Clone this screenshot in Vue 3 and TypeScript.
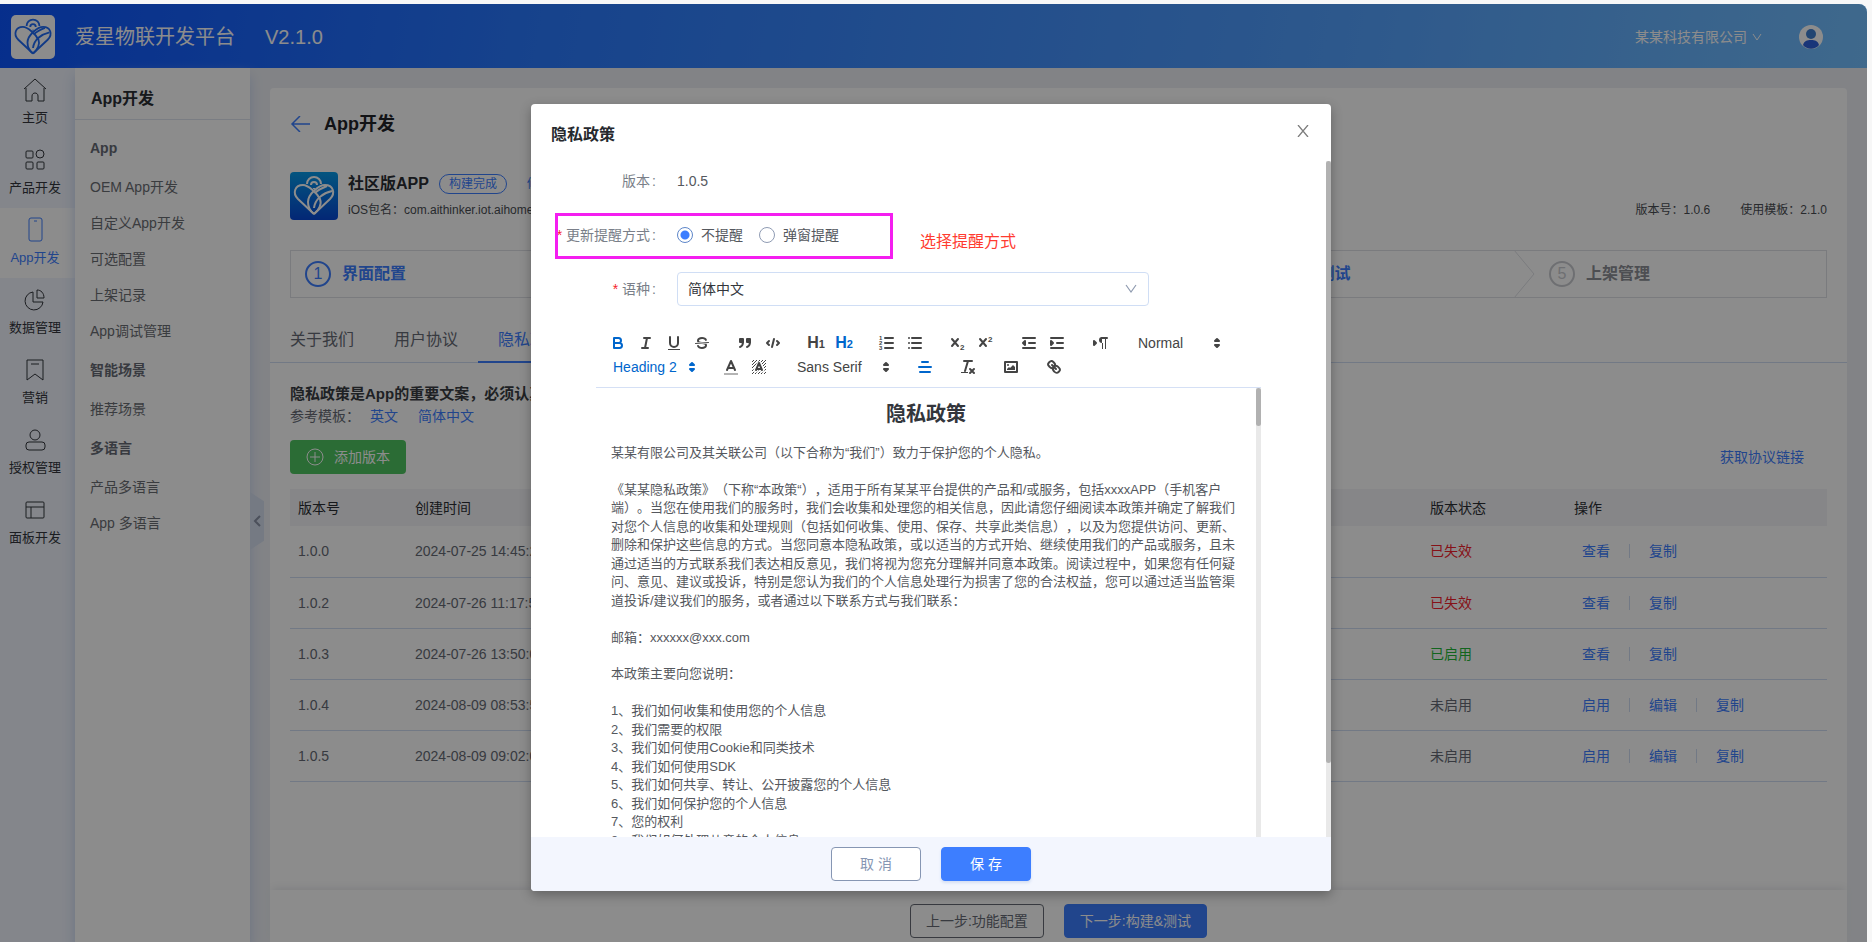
<script setup lang="ts">
import { ref } from 'vue'

interface MenuEntry { text: string; heading?: boolean }
interface VersionRow { version: string; time: string; status: string; tone: string; actions: string[] }

const railItems = [
  { key: 'home', text: '主页' },
  { key: 'product', text: '产品开发' },
  { key: 'app', text: 'App开发' },
  { key: 'data', text: '数据管理' },
  { key: 'market', text: '营销' },
  { key: 'auth', text: '授权管理' },
  { key: 'panel', text: '面板开发' },
]
const activeRail = ref('app')

const menu: MenuEntry[] = [
  { text: 'App', heading: true },
  { text: 'OEM App开发' },
  { text: '自定义App开发' },
  { text: '可选配置' },
  { text: '上架记录' },
  { text: 'App调试管理' },
  { text: '智能场景', heading: true },
  { text: '推荐场景' },
  { text: '多语言', heading: true },
  { text: '产品多语言' },
  { text: 'App 多语言' },
]

const steps = ['界面配置', '功能配置', '证书配置', '构建&测试', '上架管理']
const tabs = ['关于我们', '用户协议', '隐私政策']
const activeTab = ref('隐私政策')

const rows: VersionRow[] = [
  { version: '1.0.0', time: '2024-07-25 14:45:22', status: '已失效', tone: 'bad', actions: ['查看', '复制'] },
  { version: '1.0.2', time: '2024-07-26 11:17:50', status: '已失效', tone: 'bad', actions: ['查看', '复制'] },
  { version: '1.0.3', time: '2024-07-26 13:50:01', status: '已启用', tone: 'good', actions: ['查看', '复制'] },
  { version: '1.0.4', time: '2024-08-09 08:53:51', status: '未启用', tone: 'idle', actions: ['启用', '编辑', '复制'] },
  { version: '1.0.5', time: '2024-08-09 09:02:01', status: '未启用', tone: 'idle', actions: ['启用', '编辑', '复制'] },
]

const remind = ref('none')
const language = ref('zh')

const paragraphs = [
  '某某有限公司及其关联公司（以下合称为“我们”）致力于保护您的个人隐私。',
  '',
  '《某某隐私政策》（下称“本政策“），适用于所有某某平台提供的产品和/或服务，包括xxxxAPP（手机客户端）。当您在使用我们的服务时，我们会收集和处理您的相关信息，因此请您仔细阅读本政策并确定了解我们对您个人信息的收集和处理规则（包括如何收集、使用、保存、共享此类信息），以及为您提供访问、更新、删除和保护这些信息的方式。当您同意本隐私政策，或以适当的方式开始、继续使用我们的产品或服务，且未通过适当的方式联系我们表达相反意见，我们将视为您充分理解并同意本政策。阅读过程中，如果您有任何疑问、意见、建议或投诉，特别是您认为我们的个人信息处理行为损害了您的合法权益，您可以通过适当监管渠道投诉/建议我们的服务，或者通过以下联系方式与我们联系：',
  '',
  '邮箱：xxxxxx@xxx.com',
  '',
  '本政策主要向您说明：',
  '',
  '1、我们如何收集和使用您的个人信息',
  '2、我们需要的权限',
  '3、我们如何使用Cookie和同类技术',
  '4、我们如何使用SDK',
  '5、我们如何共享、转让、公开披露您的个人信息',
  '6、我们如何保护您的个人信息',
  '7、您的权利',
  '8、我们如何处理儿童的个人信息',
]
</script>

<template>
  <div class="window">
    <div class="frame">
      <header class="topbar">
        <span class="logo">
          <svg viewBox="0 0 48 48" class="emblem">
            <path d="M24 42 8 27C2 21 5 13 13 13c5 0 14 8 17 14 2 5-1 11-6 15" />
            <path d="M24 42 40 27c6-6 3-14-5-14-6 0-17 9-17 17 0 5 2 9 6 12" />
            <path d="M42 19c-9 2-17 8-18 17M37 14c-5 2-9 4-12 7" />
            <path d="M17 12a7 7 0 0 1 14 0M21 13a3 3 0 0 1 6 0M24 16v1" />
          </svg>
        </span>
        <span class="brand">爱星物联开发平台</span>
        <span class="release">V2.1.0</span>
        <button class="company" type="button">
          某某科技有限公司
          <svg viewBox="0 0 10 10" width="10" height="10"><path d="M1 2l4 6 4-6" fill="none" stroke="currentColor" /></svg>
        </button>
        <svg class="avatar" viewBox="0 0 24 24">
          <circle cx="12" cy="12" r="12" fill="#fff" />
          <circle cx="12" cy="9" r="5" fill="#3d7fd0" />
          <path d="M4 20c1-4 4-5 8-5s7 1 8 5c-4 5-12 5-16 0z" fill="#2f62dc" />
        </svg>
      </header>

      <div class="body">
        <nav class="rail">
          <a v-for="item in railItems" :key="item.key" href="#" :class="{ on: item.key === activeRail }" @click.prevent="activeRail = item.key">
            <svg viewBox="0 0 24 24">
              <template v-if="item.key === 'home'"><path d="M1 11 12 1l11 10M3 10v13h6v-5c0-4 6-4 6 0v5h6V10" /></template>
              <template v-else-if="item.key === 'product'"><rect x="3" y="3" width="7" height="7" rx="1" /><circle cx="17" cy="6" r="4" /><rect x="3" y="14" width="7" height="7" rx="1" /><rect x="14" y="14" width="7" height="7" rx="1" /></template>
              <template v-else-if="item.key === 'app'"><rect x="6" y="0" width="13" height="23" rx="2" /><path d="M11 3h3" /></template>
              <template v-else-if="item.key === 'data'"><path d="M10 4a9 9 0 1 0 10 10H10z" /><path d="M14 2v8h7c0-5-3-8-7-8z" /></template>
              <template v-else-if="item.key === 'market'"><path d="M4 2h16v20l-8-6-8 6z" /><path d="M8 6h8" /></template>
              <template v-else-if="item.key === 'auth'"><circle cx="12" cy="7" r="5" /><rect x="3" y="14" width="19" height="8" rx="3" /></template>
              <template v-else><rect x="3" y="4" width="18" height="16" rx="1" /><path d="M3 9h18M8 9v11" /></template>
            </svg>
            <span>{{ item.text }}</span>
          </a>
        </nav>

        <aside class="side">
          <h2>App开发</h2>
          <ul>
            <li v-for="entry in menu" :key="entry.text" :class="{ heading: entry.heading }">
              <strong v-if="entry.heading">{{ entry.text }}</strong>
              <a v-else href="#" @click.prevent>{{ entry.text }}</a>
            </li>
          </ul>
          <button class="collapse" type="button" aria-label="收起菜单">
            <svg viewBox="0 0 8 12" width="8" height="12"><path d="M7 1 2 6l5 5" fill="none" stroke="#8a93a6" stroke-width="2" /></svg>
          </button>
        </aside>

        <main class="main">
          <section class="card">
            <div class="title">
              <button type="button" aria-label="返回">
                <svg viewBox="0 0 20 16" width="20" height="16"><path d="M10 0 2 8l8 8M2 8h18" fill="none" stroke="#3d7eff" stroke-width="1.5" /></svg>
              </button>
              <h1>App开发</h1>
            </div>

            <div class="app">
              <span class="appicon">
                <svg viewBox="0 0 48 48" class="emblem">
                  <path d="M24 42 8 27C2 21 5 13 13 13c5 0 14 8 17 14 2 5-1 11-6 15" />
                  <path d="M24 42 40 27c6-6 3-14-5-14-6 0-17 9-17 17 0 5 2 9 6 12" />
                  <path d="M42 19c-9 2-17 8-18 17M37 14c-5 2-9 4-12 7" />
                  <path d="M17 12a7 7 0 0 1 14 0M21 13a3 3 0 0 1 6 0M24 16v1" />
                </svg>
              </span>
              <div class="appinfo">
                <div class="appname"><strong>社区版APP</strong><span class="tag">构建完成</span><a href="#" @click.prevent>修改</a></div>
                <div class="pkg">iOS包名：com.aithinker.iot.aihome</div>
              </div>
              <div class="appmeta"><span>版本号：1.0.6</span><span>使用模板：2.1.0</span></div>
            </div>

            <ol class="steps">
              <li v-for="(step, i) in steps" :key="step" :class="{ todo: i === 4 }">
                <span class="num">{{ i + 1 }}</span>
                <strong>{{ step }}</strong>
                <svg v-if="i < 4" viewBox="0 0 22 48" width="22" height="48"><path d="M1 0l20 24L1 48" fill="none" stroke="#dfe1e6" /></svg>
              </li>
            </ol>

            <div class="tabs">
              <button v-for="tab in tabs" :key="tab" type="button" :class="{ on: tab === activeTab }" @click="activeTab = tab">{{ tab }}</button>
            </div>

            <p class="notice">隐私政策是App的重要文案，必须认真填写</p>
            <p class="refs">参考模板：<a href="#" @click.prevent>英文</a><a href="#" @click.prevent>简体中文</a></p>

            <div class="actions">
              <button class="add" type="button">
                <svg viewBox="0 0 18 18" width="18" height="18"><circle cx="9" cy="9" r="8" /><path d="M9 4v10M4 9h10" /></svg>
                添加版本
              </button>
              <a href="#" @click.prevent>获取协议链接</a>
            </div>

            <table>
              <thead>
                <tr><th class="c1">版本号</th><th>创建时间</th><th class="c3">版本状态</th><th class="c4">操作</th></tr>
              </thead>
              <tbody>
                <tr v-for="row in rows" :key="row.version">
                  <td>{{ row.version }}</td>
                  <td>{{ row.time }}</td>
                  <td :class="row.tone">{{ row.status }}</td>
                  <td><div class="ops"><a v-for="action in row.actions" :key="action" href="#" @click.prevent>{{ action }}</a></div></td>
                </tr>
              </tbody>
            </table>
          </section>
          <footer class="bottom">
            <button class="ghost" type="button">上一步:功能配置</button>
            <button class="solid" type="button">下一步:构建&amp;测试</button>
          </footer>
        </main>
      </div>

      <div class="mask">
        <div class="modal" role="dialog" aria-labelledby="dialog-title">
          <div class="modal-head">
            <h2 id="dialog-title">隐私政策</h2>
            <button type="button" aria-label="关闭">
              <svg viewBox="0 0 12 12" width="12" height="12"><path d="M1 0l10 12M11 0 1 12" fill="none" stroke="#7d7d7d" stroke-width="1.3" /></svg>
            </button>
          </div>

          <div class="modal-body">
            <div class="row">
              <span class="label">版本<i>:</i></span>
              <span class="value">1.0.5</span>
            </div>
            <div class="row" role="radiogroup" aria-labelledby="remind-label">
              <span id="remind-label" class="label"><b>*</b>更新提醒方式<i>:</i></span>
              <label class="radio"><input v-model="remind" type="radio" name="remind" value="none" />不提醒</label>
              <label class="radio"><input v-model="remind" type="radio" name="remind" value="popup" />弹窗提醒</label>
              <span class="frame-mark"></span>
              <span class="hint">选择提醒方式</span>
            </div>
            <div class="row">
              <label class="label" for="language"><b>*</b>语种<i>:</i></label>
              <span class="select">
                <select id="language" v-model="language"><option value="zh">简体中文</option><option value="en">英文</option></select>
                <svg viewBox="0 0 12 10" width="12" height="10"><path d="M1 1l5 7 5-7" fill="none" stroke="#8f9bb0" stroke-width="1.2" /></svg>
              </span>
            </div>

            <div class="editor">
              <div class="toolbar">
                <div class="line">
                  <div class="group">
                    <button type="button" class="on" aria-label="加粗"><svg viewBox="0 0 18 18"><path d="M5 4h4.500a2.500 2.500 0 0 1 0 5H5zM5 9h5.500a2.500 2.500 0 0 1 0 5H5z" /></svg></button>
                    <button type="button" aria-label="斜体"><svg viewBox="0 0 18 18"><path d="M7 4h6M5 14h6M8 14l2-10" /></svg></button>
                    <button type="button" aria-label="下划线"><svg viewBox="0 0 18 18"><path d="M5 3v6a4 4 0 0 0 8 0V3" /><rect class="fill" x="3" y="15" width="12" height="1" /></svg></button>
                    <button type="button" aria-label="删除线"><svg viewBox="0 0 18 18"><path class="thin" d="M15.500 8.500l-13 1" /><path class="fill" d="M9 8C6.500 7.800 6 7.500 6 6.500 6 5.800 7.300 5 9 5c1.600 0 2.800.7 3 1.300a1 1 0 0 0 1.900-.6C13.400 4.100 11.400 3 9 3 6.200 3 4 4.500 4 6.500a3.200 3.200 0 0 0 .5 1.800zM9 10c2.500.2 3 .5 3 1.500 0 .7-1.300 1.500-3 1.500-1.600 0-2.800-.7-3-1.300a1 1 0 1 0-1.900.6C4.600 13.900 6.600 15 9 15c2.800 0 5-1.500 5-3.500a3.200 3.200 0 0 0-.5-1.800z" /></svg></button>
                  </div>
                  <div class="group">
                    <button type="button" aria-label="引用"><svg viewBox="0 0 18 18"><rect class="both" x="4" y="5" width="3" height="3" /><rect class="both" x="11" y="5" width="3" height="3" /><path d="M7 8c0 4-3 5-3 5M14 8c0 4-3 5-3 5" /></svg></button>
                    <button type="button" aria-label="代码"><svg viewBox="0 0 18 18"><path d="M5 7 3 9l2 2M13 7l2 2-2 2M10 5 8 13" /></svg></button>
                  </div>
                  <div class="group">
                    <button type="button" class="hx">H<small>1</small></button>
                    <button type="button" class="hx on">H<small>2</small></button>
                  </div>
                  <div class="group">
                    <button type="button" aria-label="有序列表"><svg viewBox="0 0 18 18"><path d="M7 4h8M7 9h8M7 14h8" /><text x="1" y="6">1</text><text x="1" y="11">2</text><text x="1" y="16">3</text></svg></button>
                    <button type="button" aria-label="无序列表"><svg viewBox="0 0 18 18"><path d="M6 4h9M6 9h9M6 14h9M3 4v0M3 9v0M3 14v0" /></svg></button>
                  </div>
                  <div class="group">
                    <button type="button" aria-label="下标"><svg viewBox="0 0 18 18"><path d="M3 5l6 7M9 5l-6 7" /><text class="digit" x="11" y="16">2</text></svg></button>
                    <button type="button" aria-label="上标"><svg viewBox="0 0 18 18"><path d="M3 5l6 7M9 5l-6 7" /><text class="digit" x="11" y="8">2</text></svg></button>
                  </div>
                  <div class="group">
                    <button type="button" aria-label="减少缩进"><svg viewBox="0 0 18 18"><path d="M3 14h12M3 4h12M9 9h6" /><path class="both" d="M5 7v4L3 9z" /></svg></button>
                    <button type="button" aria-label="增加缩进"><svg viewBox="0 0 18 18"><path d="M3 14h12M3 4h12M9 9h6" /><path class="both" d="M3 7v4l2-2z" /></svg></button>
                  </div>
                  <div class="group">
                    <button type="button" aria-label="文字方向"><svg viewBox="0 0 18 18"><path class="both" d="M3 11l2-2-2-2z" /><path d="M16 4h-5" /><path class="fill" d="M11 3a3 3 0 0 0 0 6h1V3zM11 4h1v11h-1zM14 4h1v11h-1z" /></svg></button>
                  </div>
                  <span class="picker"><select aria-label="字号"><option>Normal</option></select><svg viewBox="0 0 18 18"><path class="both" d="M7 11l2 2 2-2zM7 7l2-2 2 2z" /></svg></span>
                </div>
                <div class="line">
                  <span class="picker on"><select aria-label="标题级别"><option>Heading 2</option></select><svg viewBox="0 0 18 18"><path class="both" d="M7 11l2 2 2-2zM7 7l2-2 2 2z" /></svg></span>
                  <div class="group">
                    <button type="button" aria-label="文字颜色"><svg viewBox="0 0 18 18"><rect class="fill pale" x="2" y="15" width="14" height="2" /><path d="M5 12l4-9 4 9M6 10h6" /></svg></button>
                    <button type="button" aria-label="背景颜色"><svg viewBox="0 0 18 18">
                      <defs><pattern id="hatch" width="3" height="3" patternUnits="userSpaceOnUse"><path class="hair" d="M0 3l3-3M-1 1l2-2M2 4l2-2" /></pattern></defs>
                      <rect class="hatched" x="2" y="2" width="14" height="14" fill="url(#hatch)" />
                      <path class="halo" d="M6 12l3-6 3 6" /><path d="M6 12l3-7 3 7M7 11h4" />
                    </svg></button>
                  </div>
                  <span class="picker wide"><select aria-label="字体"><option>Sans Serif</option></select><svg viewBox="0 0 18 18"><path class="both" d="M7 11l2 2 2-2zM7 7l2-2 2 2z" /></svg></span>
                  <div class="group">
                    <button type="button" class="on" aria-label="居中"><svg viewBox="0 0 18 18"><path d="M3 9h12M4 14h10M6 4h6" /></svg></button>
                  </div>
                  <div class="group">
                    <button type="button" aria-label="清除格式"><svg viewBox="0 0 18 18"><path d="M5 3h8M6 13 9 3M11 11l4 4M15 11l-4 4" /><rect class="fill" x="2" y="14" width="7" height="1" /></svg></button>
                  </div>
                  <div class="group">
                    <button type="button" aria-label="图片"><svg viewBox="0 0 18 18"><rect x="3" y="4" width="12" height="10" /><circle class="fill" cx="6" cy="7" r="1" /><path class="fill" d="M5 12v-1l2-2 1 1 3-3 2 2v3z" /></svg></button>
                  </div>
                  <div class="group">
                    <button type="button" aria-label="链接"><svg viewBox="0 0 18 18"><path d="M7 7l4 4M8.900 4.600a3.500 3.500 0 0 1 .4 4.700 3.500 3.500 0 0 1-4.700-.4C3.200 7.500 2 6.400 4.200 4.200s3.300-1 4.700.4zM13.400 9.100a3.500 3.500 0 0 0-4.700-.4 3.500 3.500 0 0 0 .4 4.700c1.400 1.400 2.500 2.500 4.700.4s1-3.300-.4-4.700z" /></svg></button>
                  </div>
                </div>
              </div>
              <div class="content">
                <h3>隐私政策</h3>
                <p v-for="(text, i) in paragraphs" :key="i">{{ text }}<br v-if="!text" /></p>
                <span class="track"><span class="thumb"></span></span>
              </div>
            </div>
          </div>
          <span class="body-track"><span class="body-thumb"></span></span>

          <div class="modal-foot">
            <button class="cancel" type="button">取 消</button>
            <button class="save" type="button">保 存</button>
          </div>
        </div>
      </div>
    </div>
  </div>
</template>

<style>
html, body { margin: 0; }
body { background: #f7f7f7; overflow: hidden; }
</style>

<style scoped>
* { box-sizing: border-box; }
.window {
  height: 100vh;
  padding: 4px 5px 0 0;
  font: 14px/20px "Liberation Sans", "Noto Sans CJK SC", sans-serif;
  color: #666b75;
}
.frame { position: relative; display: flex; flex-direction: column; height: 100%; border-radius: 0 8px 0 0; overflow: hidden; background: #edeff4; }
h1, h2, h3, p, ul, ol { margin: 0; padding: 0; list-style: none; }
a { color: #3d7eff; text-decoration: none; }
button, select { font: inherit; color: inherit; border: 0; background: none; padding: 0; margin: 0; }

.topbar { display: flex; align-items: center; flex: none; height: 64px; padding: 2px 44px 0 11px; color: #fff; background: linear-gradient(100deg, #0c55ff, #2a7aff 29%, #52a0ff 71%, #73bfff); }
.logo { width: 44px; height: 44px; border-radius: 5px; background: #fff; margin-right: 20px; }
.emblem { display: block; width: 100%; height: 100%; fill: none; stroke: #fff; stroke-width: 2; stroke-linejoin: round; }
.logo .emblem { stroke: #1f6bf5; }
.brand, .release { font-size: 20px; line-height: 28px; }
.release { margin-left: 30px; }
.company { display: flex; align-items: center; gap: 5px; margin-left: auto; }
.avatar { width: 24px; height: 24px; margin-left: 37px; }

.body { display: flex; flex: 1; min-height: 0; }
.rail { width: 75px; flex: none; background: #f0f4fd; }
.rail a { display: flex; flex-direction: column; align-items: center; height: 70px; padding: 10px 5px 0 0; gap: 6px; font-size: 13px; color: #33363c; }
.rail a.on { background: #fff; color: #3d7eff; }
.rail svg { width: 24px; height: 24px; fill: none; stroke: currentColor; overflow: visible; }
.side { position: relative; width: 175px; flex: none; background: #fff; box-shadow: 0 8px 12px #c3d2ee; }
.side h2 { height: 52px; padding: 21px 15px 0 16px; font-size: 16px; line-height: 20px; color: #2b2e33; border-bottom: 1px solid #dfe3ee; }
.side ul { padding-top: 7px; }
.side li { display: flex; align-items: center; height: 36px; padding-left: 15px; }
.side li.heading { height: 42px; }
.side li a { color: #6a6d73; }
.collapse { position: absolute; left: 100%; top: 424px; width: 14px; height: 58px; background: #d5deef; clip-path: polygon(0 0, 100% 16%, 100% 84%, 0 100%); display: flex; align-items: center; justify-content: center; }

.main { display: flex; flex-direction: column; flex: 1; min-width: 0; padding: 20px 20px 0; }
.card { flex: 1; background: #fff; border-radius: 4px 4px 0 0; padding: 24px 20px 0; min-height: 0; }
.title { display: flex; align-items: center; gap: 14px; height: 24px; }
.title button { display: flex; }
h1 { font-size: 18px; line-height: 24px; color: #222429; }
.app { display: flex; margin-top: 36px; color: #4a4d53; font-size: 12px; }
.appicon { width: 48px; height: 48px; border-radius: 4px; background: linear-gradient(#079be8, #0647d6); margin-right: 10px; }
.appname { display: flex; align-items: center; height: 24px; }
.appname strong { font-size: 16px; color: #2b2e33; }
.tag { margin: 0 20px 0 10px; height: 20px; padding: 0 9px; border: 1px solid #3d7eff; border-radius: 10px; line-height: 18px; color: #3d7eff; }
.pkg { margin-top: 4px; }
.appmeta { display: flex; gap: 30px; margin: 28px 0 0 auto; }
.steps { display: grid; grid-template-columns: repeat(4, minmax(0, calc((100% - 80px) / 5 + 20px))) 1fr; height: 48px; margin-top: 30px; border: 1px solid #dfe1e6; }
.steps li { display: flex; align-items: center; padding-left: 14px; color: #3d7eff; }
.steps svg { margin: -1px 0 -1px auto; }
.num { width: 26px; height: 26px; border: 2px solid currentColor; border-radius: 50%; text-align: center; font-size: 16px; line-height: 22px; margin-right: 11px; }
.steps strong { font-size: 16px; }
.steps .todo .num { color: #c9cbd0; }
.steps .todo strong { color: #8c8f96; }
.tabs { display: flex; margin: 20px -20px 0; border-bottom: 1px solid #cfdcf2; }
.tabs button { height: 45px; padding: 0 20px; margin-bottom: -1px; font-size: 16px; border-bottom: 2px solid transparent; }
.tabs .on { color: #3d7eff; border-color: #3d7eff; }
.notice { margin-top: 20px; line-height: 22px; font-size: 15px; font-weight: bold; color: #3a3d43; }
.refs { line-height: 22px; }
.refs a:first-of-type { margin-right: 20px; margin-left: 10px; }
.actions { display: flex; align-items: center; justify-content: space-between; margin-top: 13px; padding-right: 23px; }
.add { display: flex; align-items: center; gap: 10px; height: 34px; padding: 0 16px; border-radius: 4px; background: #4fc562; color: #fff; }
.add svg { fill: none; stroke: #fff; }
table { width: 100%; margin-top: 15px; border-collapse: collapse; table-layout: fixed; }
th { height: 37px; padding: 0 8px; text-align: left; font-weight: normal; color: #2b2e33; background: #f4f5f8; }
td { height: 51px; padding: 0 8px; border-bottom: 1px solid #cfdcf2; }
.c1 { width: 117px; }
.c3 { width: 144px; }
.c4 { width: 261px; }
.bad { color: #f5222d; }
.good { color: #1fb838; }
.ops { display: flex; }
.ops a { line-height: 14px; padding: 0 19px; }
.ops a:first-child { padding-left: 8px; }
.ops a + a { border-left: 1px solid #cfdcf2; }
.bottom { position: relative; display: flex; flex: none; justify-content: center; gap: 20px; height: 52px; padding-top: 14px; background: #fff; box-shadow: 0 -4px 8px -2px #e9eaed; }
.bottom button { height: 34px; padding: 0 15px; border: 1px solid #666b75; border-radius: 4px; }
.bottom .solid { background: #3d7eff; border-color: #3d7eff; color: #fff; }

.mask { position: absolute; inset: 0; display: flex; justify-content: center; padding: 100px 5px 51px 0; background: rgba(0, 0, 0, .45); }
.modal { position: relative; display: flex; flex-direction: column; width: 800px; background: #fff; border-radius: 4px; overflow: hidden; box-shadow: 0 4px 12px rgba(0, 0, 0, .3); }
.modal-head { display: flex; flex: none; justify-content: space-between; align-items: center; height: 60px; padding: 2px 22px 0 20px; }
.modal-head h2 { font-size: 16px; line-height: 24px; color: #26292e; }
.modal-head button { display: flex; margin-bottom: 8px; }
.modal-body { display: flex; flex-direction: column; flex: 1; min-height: 0; padding: 0 70px 0 0; }
.row { position: relative; display: flex; flex: none; align-items: center; height: 34px; margin-bottom: 20px; color: #55585e; }
.row:nth-child(3) { margin-bottom: 17px; }
.label { width: 126px; margin-right: 20px; text-align: right; color: #7a7f89; }
.label i { font-style: normal; margin: 0 1px 0 2px; }
.label b { margin-right: 4px; font-weight: normal; color: #f5222d; }
.radio { display: flex; align-items: center; gap: 8px; margin-right: 16px; }
.radio input { appearance: none; width: 16px; height: 16px; margin: 0; border: 1px solid #8f9bb3; border-radius: 50%; }
.radio input:checked { border-color: #5d86c9; background: radial-gradient(#3d7eff 4px, #fff 5px); }
.frame-mark { position: absolute; left: 24px; top: -5px; width: 338px; height: 46px; border: 3px solid #f41ef0; }
.hint { position: absolute; left: 389px; top: 14px; font-size: 16px; color: #ff3b30; }
.select { display: grid; align-items: center; width: 472px; }
.select > *, .picker > * { grid-area: 1 / 1; }
.select select { appearance: none; height: 34px; padding: 0 10px; border: 1px solid #d0def5; border-radius: 4px; color: #33363c; }
.select svg { justify-self: end; margin-right: 12px; pointer-events: none; }

.editor { display: flex; flex-direction: column; flex: 1; min-height: 0; margin-left: 65px; }
.toolbar { flex: none; padding: 8px 0 8px 8px; border-bottom: 1px solid #d5e0f5; color: #444; }
.line { display: flex; gap: 15px; height: 24px; }
.group { display: flex; }
.toolbar button { width: 28px; height: 24px; padding: 3px 5px; }
.toolbar svg { display: block; width: 18px; height: 18px; fill: none; stroke: currentColor; stroke-width: 2; stroke-linecap: round; stroke-linejoin: round; pointer-events: none; }
.toolbar .fill { fill: currentColor; stroke: none; }
.toolbar .both { fill: currentColor; }
.toolbar .thin { stroke-width: 1; }
.toolbar .pale { opacity: .4; }
.toolbar .hair { stroke-width: 1; stroke-linecap: butt; }
.toolbar .hatched { stroke: none; }
.toolbar .halo { stroke: #fff; stroke-width: 5; fill: #fff; }
.toolbar text { fill: currentColor; stroke: none; font-size: 6px; font-weight: bold; }
.toolbar .digit { font-size: 8px; }
.toolbar .on { color: #06c; }
.toolbar .hx { padding: 0; font-size: 16px; font-weight: bold; line-height: 24px; }
.hx small { font-size: 11px; }
.picker { display: grid; align-items: center; width: 98px; }
.picker.wide { width: 108px; }
.picker select { appearance: none; height: 24px; padding: 0 9px; }
.toolbar .picker svg { justify-self: end; margin-right: 1px; }
.content { position: relative; flex: 1; min-height: 0; overflow: hidden; padding: 12px 20px 0 15px; font-size: 13px; line-height: 1.42; color: #55585e; text-spacing-trim: space-all; }
h3 { margin-bottom: 16px; font-size: 20px; line-height: 28px; text-align: center; color: #33363c; }
.track { position: absolute; right: 0; top: 0; bottom: 0; width: 5px; background: #e9e9e9; }
.thumb { display: block; height: 38px; border-radius: 3px; background: #b1b1b1; }
.body-track { position: absolute; right: 0; top: 57px; bottom: 54px; width: 5px; background: #e9e9e9; }
.body-thumb { display: block; height: 89%; border-radius: 3px; background: #b1b1b1; }
.modal-foot { display: flex; flex: none; justify-content: center; align-items: center; gap: 20px; height: 54px; background: #f3f6fe; }
.modal-foot button { width: 90px; height: 34px; border: 1px solid #8696b3; border-radius: 4px; background: #fff; color: #8696b3; }
.modal-foot .save { border-color: #3d7eff; background: #3d7eff; color: #fff; box-shadow: 0 2px 3px #d5dff3; }
</style>
